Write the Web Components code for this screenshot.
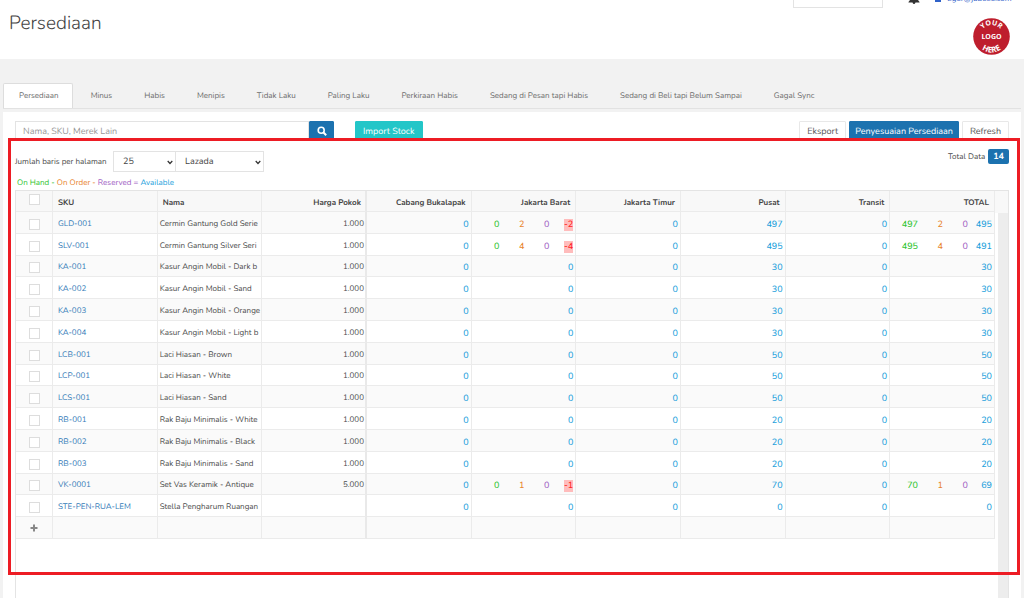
<!DOCTYPE html>
<html lang="id">
<head>
<meta charset="utf-8">
<title>Persediaan</title>
<style>
html,body{margin:0;background:#f2f2f2;height:100%;overflow:hidden}
body{font:9px/12px Nunito,"Open Sans",sans-serif;color:#4a4a4a;text-rendering:geometricPrecision}
</style>
</head>
<body>
<inventory-page></inventory-page>

<template id="page">
<style>
:host{display:flex;flex-direction:column;min-height:100vh}
.panel{position:relative;flex:1;display:flex;flex-direction:column;background:#fff;margin:0 3px;padding:9px 12px 0}
.frame{position:absolute;top:26px;left:5px;right:1px;height:431px;border:3px solid #ed1c24;pointer-events:none}
</style>
<page-header></page-header>
<tab-bar></tab-bar>
<main class="panel">
<action-bar></action-bar>
<filter-bar></filter-bar>
<stock-legend></stock-legend>
<stock-table></stock-table>
<div class="frame"></div>
</main>
</template>

<template id="header">
<style>
:host{display:flex;justify-content:space-between;height:59px;background:#fff}
h1{margin:10px 0 0 9px;font:300 19px/26px Nunito,Lato,sans-serif;color:#444}
.side{display:flex;flex-direction:column;align-items:flex-end;gap:10px;padding-right:14px}
.top{display:flex;align-items:flex-start;height:8px}
input{width:90px;height:8px;box-sizing:border-box;border:1px solid #e3e3e3;border-top:0;padding:0;outline:0;background:#fff}
.bell{margin:0 15px 0 25px}
a{display:flex;gap:6px;margin:-7px -2px 0 0;width:77px;color:#2f62c9;text-decoration:none;height:12px;font-size:8px}
svg{display:block}
</style>
<h1>Persediaan</h1>
<div class="side">
<div class="top">
<input aria-label="Cari">
<svg class="bell" width="12" height="4" viewBox="0 0 12 4"><path d="M2 0H10L11.500 2V2.500H.5V2ZM4.500 2.500H7.500Q7 4 6 4T4.500 2.500" fill="#333"/></svg>
<a href="#"><svg width="6" height="12" viewBox="0 0 6 12"><path d="M0 9V7Q3 5 6 7V9Z" fill="#2f62c9"/></svg>tiger@jubelio.com</a>
</div>
<svg width="37" height="37" viewBox="0 0 37 37" role="img" aria-label="Logo">
<defs><path id="up" d="M7 18.500A11.500 11.500 0 0 1 30 18.500"/><path id="down" d="M2.500 18.500A16 16 0 0 0 34.500 18.500"/></defs>
<circle cx="18.500" cy="18.500" r="18.300" fill="#be1e2d"/>
<g fill="#fff" font-family="Open Sans, sans-serif" font-weight="700" font-size="7" text-anchor="middle">
<text><textPath href="#up" startOffset="50%">YOUR</textPath></text><text x="18.500" y="20.500">LOGO</text><text font-size="8"><textPath href="#down" startOffset="50%">HERE</textPath></text></g>
</svg>
</div>
</template>

<template id="tabs">
<style>
:host{display:block;padding:24px 3px 3px;background:#f2f2f2}
nav{display:flex;border-bottom:1px solid #e2e2e2;height:25px;gap:2px}
a{box-sizing:border-box;padding:6px 13px 6px 15px;border:1px solid transparent;border-bottom:0;color:#6c6c6c;text-decoration:none;white-space:nowrap;font-size:8px}
a.on{height:25px;background:#fff;border-color:#ddd;border-radius:2px 2px 0 0}
</style>
<nav></nav>
</template>

<template id="actions">
<style>
:host{display:flex;height:20px;gap:3px}
form{display:flex;width:319px;margin-right:18px}
input{flex:1;min-width:0;border:1px solid #e3e3e3;padding:1px 7px 0;font:inherit;outline:0;text-rendering:inherit}
input::placeholder{color:#999;opacity:1}
button{box-sizing:border-box;height:20px;padding:2px 7px 0;border:1px solid #e8e8e8;border-radius:1px;background:#fff;color:#555;font:inherit;white-space:nowrap;text-rendering:inherit}
.search{width:25px;padding:0;display:grid;place-items:center}
.teal{background:#23c6c8;border-color:#23c6c8;color:#fff}
.blue{background:#1c72af;border-color:#1c72af;color:#fff}
.wide{padding:2px 5px 0}
.gap{flex:1}
</style>
<form><input aria-label="Cari barang" placeholder="Nama, SKU, Merek Lain"><button type="button" class="search blue" aria-label="Cari"><svg width="10" height="10" viewBox="0 0 10 10" fill="none" stroke="#fff" stroke-width="1.600"><circle cx="4.200" cy="4.200" r="3"/><path d="M6.500 6.500L9.200 9.200" stroke-width="2"/></svg></button></form>
<button class="teal">Import Stock</button><span class="gap"></span>
<button>Eksport</button><button class="blue wide">Penyesuaian Persediaan</button><button>Refresh</button>
</template>

<template id="filters">
<style>
:host{display:flex;align-items:flex-start;margin-top:8px;height:24px}
label{padding-top:7px;width:98px;white-space:nowrap;font-size:8px}
.pick{position:relative;margin-top:2px}
select{appearance:none;box-sizing:border-box;display:block;height:21px;border:1px solid #e3e3e3;border-radius:0;background:#fff;font:inherit;color:#444;padding:1px 9px 0;outline:0;text-rendering:inherit}
.rows{width:63px}.shop{width:88px;border-left:0}
svg{position:absolute;right:3px;top:9px;pointer-events:none}
.total{margin-left:auto;display:flex;gap:3px;line-height:14px;font-size:8px;padding-top:1px}
b{background:#1c72af;color:#fff;border-radius:2px;padding:1px 5px 0;margin-top:-1px;font-size:9px}
</style>
<label for="rows">Jumlah baris per halaman</label>
<span class="pick"><select class="rows" id="rows"><option>25</option><option>50</option></select><svg width="6" height="5" viewBox="0 0 6 5"><path d="M.7 1L3 3.500L5.300 1" fill="none" stroke="#333" stroke-width="1.200"/></svg></span>
<span class="pick"><select class="shop" aria-label="Toko"><option>Lazada</option></select><svg width="6" height="5" viewBox="0 0 6 5"><path d="M.7 1L3 3.500L5.300 1" fill="none" stroke="#333" stroke-width="1.200"/></svg></span>
<span class="total">Total Data <b>14</b></span>
</template>

<template id="legend">
<style>
:host{display:block;margin:4px 0 1px;padding-left:2px;color:#2fc42f;white-space:nowrap;font-size:8px}
.o{color:#e8842c}.r{color:#a262c4}.a{color:#1c9fdc}
</style>On Hand - <span class="o">On Order - </span><span class="r">Reserved = </span><span class="a">Available</span>
</template>

<template id="table">
<style>
:host{flex:1;display:grid;grid-template-columns:1fr 13px;border:1px solid #e4e4e4;border-bottom:0}
table{width:100%;height:348px;table-layout:fixed;border-collapse:separate;border-spacing:0;font-size:8px}
tr{height:21px}
th,td{box-sizing:border-box;padding:3px 2px 0;border:solid #ebebeb;border-width:0 1px 1px 0;text-align:right;white-space:nowrap;overflow:hidden;font-weight:400;line-height:14px}
th{background:#f8f8f8;font-weight:700;color:#444;padding:4px 5px 0}
th:nth-child(-n+3),td:nth-child(-n+3){text-align:left}
th:first-child,td:first-child{width:37px;text-align:center;padding:0}
td:nth-child(2){padding-left:5px}
td:nth-child(n+5){padding:0 2px}
tbody tr:nth-child(odd){background:#fafafa}
th:nth-child(4),td:nth-child(4){border-right:2px solid #e9e9e9}
th:nth-child(4){padding-right:4px}
td:nth-child(4){padding-right:1px}
a{color:#337ab7;text-decoration:none}
input{appearance:none;display:block;box-sizing:border-box;width:11px;height:11px;margin:4px auto 0;border:1px solid #ddd;background:#fff}
th input{margin:-4px auto 0}
.add{border:0;background:none;padding:0;display:block;margin:0 auto}
.add svg{display:block}
.rail{margin-top:22px;margin-left:3px;background:#ededed}
.side{background:linear-gradient(#f8f8f8 0 22px,transparent 22px);display:grid}
</style>
<table><thead><tr></tr></thead><tbody></tbody></table><div class="side"><div class="rail"></div></div>
</template>

<template id="cell">
<style>
:host{display:grid;grid-template-columns:repeat(3,25px) 24px;justify-content:end;align-items:center;padding-top:5px;color:#1c9fdc;font-size:9px;font-weight:500}
.h{color:#2fc42f}.o{color:#e8842c}.r{color:#a262c4}
.v{grid-column:4}
.neg{color:#f22;background:#ffbcbc;justify-self:end;line-height:12px}
</style>
</template>

<script>
class Base extends HTMLElement{
  constructor(){super();this.attachShadow({mode:"open"}).append(document.getElementById(this.constructor.tpl).content.cloneNode(true))}
}
const define=(name,tpl,build)=>customElements.define(name,class extends Base{
  static tpl=tpl;
  connectedCallback(){build&&build(this.shadowRoot,this)}
});
define("stock-cell","cell",(root,host)=>{
  const parts=host.getAttribute("value").split(" ");
  const kinds=parts.length===4?["h","o","r","v"]:["v"];
  parts.forEach((p,i)=>{
    const s=document.createElement("span");
    s.className=kinds[i]+(p.startsWith("-")?" neg":"");
    s.textContent=p;root.append(s);
  });
});
define("stock-table","table",root=>{
  const heads=["SKU","Nama","Harga Pokok","Cabang Bukalapak","Jakarta Barat","Jakarta Timur","Pusat","Transit","TOTAL"];
  root.querySelector("thead tr").innerHTML='<th><input type="checkbox" aria-label="Pilih semua"></th>'+heads.map(h=>`<th>${h}</th>`).join("");
  const rows=[
    ["GLD-001","Cermin Gantung Gold Serie","1.000","0 2 0 -2","497","497 2 0 495"],
    ["SLV-001","Cermin Gantung Silver Seri","1.000","0 4 0 -4","495","495 4 0 491"],
    ["KA-001","Kasur Angin Mobil - Dark b","1.000","0","30","30"],
    ["KA-002","Kasur Angin Mobil - Sand","1.000","0","30","30"],
    ["KA-003","Kasur Angin Mobil - Orange","1.000","0","30","30"],
    ["KA-004","Kasur Angin Mobil - Light b","1.000","0","30","30"],
    ["LCB-001","Laci Hiasan - Brown","1.000","0","50","50"],
    ["LCP-001","Laci Hiasan - White","1.000","0","50","50"],
    ["LCS-001","Laci Hiasan - Sand","1.000","0","50","50"],
    ["RB-001","Rak Baju Minimalis - White","1.000","0","20","20"],
    ["RB-002","Rak Baju Minimalis - Black","1.000","0","20","20"],
    ["RB-003","Rak Baju Minimalis - Sand","1.000","0","20","20"],
    ["VK-0001","Set Vas Keramik - Antique","5.000","0 1 0 -1","70","70 1 0 69"],
    ["STE-PEN-RUA-LEM","Stella Pengharum Ruangan","","0","0","0"]];
  const cell=v=>`<td><stock-cell value="${v}"></stock-cell></td>`;
  root.querySelector("tbody").innerHTML=rows.map(([sku,name,price,barat,pusat,total])=>
    `<tr><td><input type="checkbox" aria-label="${sku}"></td><td><a href="#">${sku}</a></td><td>${name}</td><td>${price}</td>${cell("0")}${cell(barat)}${cell("0")}${cell(pusat)}${cell("0")}${cell(total)}</tr>`).join("")+
    '<tr><td><button class="add" aria-label="Tambah"><svg width="8" height="8" viewBox="0 0 8 8"><path d="M4 .5V7.500M.5 4H7.500" stroke="#888" stroke-width="2"/></svg></button></td>'+"<td></td>".repeat(9)+"</tr>";
});
define("stock-legend","legend");
define("filter-bar","filters");
define("action-bar","actions");
define("tab-bar","tabs",root=>{
  root.querySelector("nav").innerHTML=["Persediaan","Minus","Habis","Menipis","Tidak Laku","Paling Laku","Perkiraan Habis","Sedang di Pesan tapi Habis","Sedang di Beli tapi Belum Sampai","Gagal Sync"].map((t,i)=>`<a href="#"${i?"":' class="on"'}>${t}</a>`).join("");
});
define("page-header","header");
define("inventory-page","page");
</script>
</body>
</html>
